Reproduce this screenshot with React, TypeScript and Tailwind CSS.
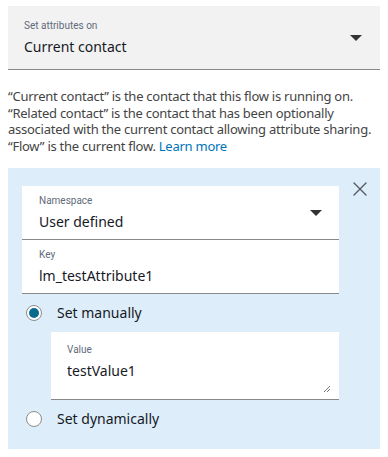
import { X } from "lucide-react";

const value = "font-['Noto_Sans',sans-serif] text-[14px] leading-[18px] text-[#16191f]";
const label = "font-['Roboto',sans-serif] text-[10px] leading-[12px] text-[#5f6b7a]";

const Caret = () => (
  <svg width="12" height="6" viewBox="0 0 12 6" className="shrink-0">
    <path d="M0 0h12L6 6z" fill="#333" />
  </svg>
);

const Radio = ({ checked, text }: { checked?: boolean; text: string }) => (
  <div className="flex items-center h-[38px] pl-[4px] gap-[15px]">
    <span className="w-[16px] h-[16px] rounded-full border border-[#8c8c8c] bg-white flex items-center justify-center">
      {checked && <span className="w-[10px] h-[10px] rounded-full bg-[#0b6b8c]" />}
    </span>
    <span className={value}>{text}</span>
  </div>
);

export default function App() {
  return (
    <div className="w-[388px] h-[457px] bg-white px-[8px] pt-[6px]">
      {/* Set attributes on */}
      <div className="h-[64px] bg-[#f2f2f2] border-b border-[#888] flex items-center pl-[16px] pr-[18px]">
        <div className="flex-1">
          <div className={label}>Set attributes on</div>
          <div className={`${value} mt-[6px]`}>Current contact</div>
        </div>
        <Caret />
      </div>

      <p className="mt-[18px] whitespace-nowrap font-['Noto_Sans',sans-serif] text-[13px] leading-[16.5px] tracking-[-0.25px] text-[#444]">
        “Current contact” is the contact that this flow is running on.
        <br />
        “Related contact” is the contact that has been optionally
        <br />
        associated with the current contact allowing attribute sharing.
        <br />
        “Flow” is the current flow. <a className="text-[#0073bb]">Learn more</a>
      </p>

      <div className="mt-[14px] bg-[#ddeefa] h-[281px] pl-[14px] pt-[18px] flex">
        <div className="w-[317px] shrink-0">
          <div className="h-[54px] bg-white border-b border-[#888] flex items-center pl-[17px] pr-[17px]">
            <div className="flex-1">
              <div className={label}>Namespace</div>
              <div className={`${value} mt-[6px]`}>User defined</div>
            </div>
            <Caret />
          </div>
          <div className="h-[54px] bg-white border-b border-[#888] flex items-center pl-[17px]">
            <div>
              <div className={label}>Key</div>
              <div className={`${value} mt-[6px]`}>lm_testAttribute1</div>
            </div>
          </div>
          <Radio checked text="Set manually" />
          <div className="ml-[29px] h-[68px] bg-white border-b border-[#888] pl-[16px] pt-[12px] relative">
            <div className={label}>Value</div>
            <div className={`${value} mt-[6px]`}>testValue1</div>
            <svg width="8" height="8" viewBox="0 0 8 8" className="absolute right-[8px] bottom-[6px]">
              <path d="M7 1L1 7M7 4L4 7" stroke="#777" strokeWidth="1" />
            </svg>
          </div>
          <Radio text="Set dynamically" />
        </div>
        <X className="ml-[9px] mt-[-9px] shrink-0 text-[#545b64]" size={24} strokeWidth={1.4} />
      </div>
    </div>
  );
}
